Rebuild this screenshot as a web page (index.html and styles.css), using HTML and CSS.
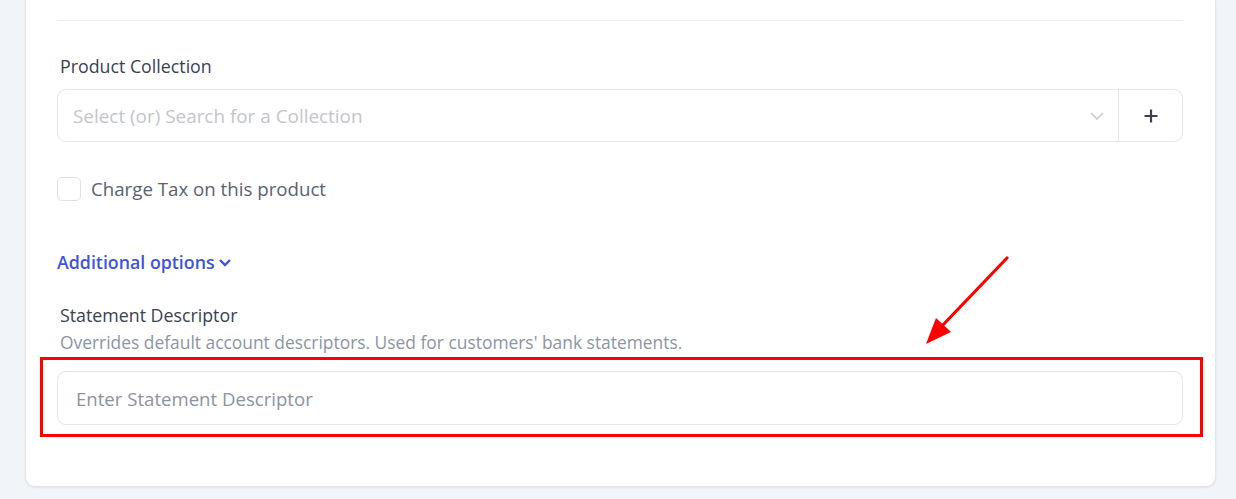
FILE: index.html
```html
<!DOCTYPE html>
<html lang="en">
<head>
<meta charset="utf-8">
<title>Product form</title>
<link rel="stylesheet" href="styles.css">
</head>
<body>
<div class="page">
  <div class="card">
    <div class="divider"></div>

    <div class="field field-collection">
      <div class="label">Product Collection</div>
      <div class="select-group">
        <div class="select">
          <span class="placeholder-light">Select (or) Search for a Collection</span>
          <svg class="chev" width="16" height="10" viewBox="0 0 16 10"><path d="M2 2 L8 8 L14 2" fill="none" stroke="#c9ccd3" stroke-width="1.6"/></svg>
        </div>
        <div class="add-btn">
          <svg width="16" height="16" viewBox="0 0 16 16"><path d="M8 1.5 V14.5 M1.5 8 H14.5" stroke="#3b4252" stroke-width="2.2" fill="none"/></svg>
        </div>
      </div>
    </div>

    <label class="check-row">
      <span class="checkbox"></span>
      <span class="check-text">Charge Tax on this product</span>
    </label>

    <div class="more">
      <span>Additional options</span>
      <svg width="14" height="9" viewBox="0 0 14 9"><path d="M2 2 L7 7 L12 2" fill="none" stroke="#3f55d4" stroke-width="2.4"/></svg>
    </div>

    <div class="field field-descriptor">
      <div class="label">Statement Descriptor</div>
      <div class="hint">Overrides default account descriptors. Used for customers' bank statements.</div>
      <div class="input-wrap">
        <div class="input"><span class="placeholder">Enter Statement Descriptor</span></div>
        <div class="highlight"></div>
      </div>
    </div>
  </div>
  <svg class="arrow" width="120" height="120" viewBox="900 240 120 120">
    <line x1="1007" y1="258" x2="941" y2="327" stroke="#ff0000" stroke-width="3.2" stroke-linecap="round"/>
    <polygon points="926,344 936,318 951,332" fill="#ff0000"/>
  </svg>
</div>
</body>
</html>
```

FILE: styles.css
```css
* { box-sizing: border-box; }

html, body {
  margin: 0;
  padding: 0;
  background: #f1f4f8;
  font-family: "Open Sans", "Noto Sans", sans-serif;
}

.page {
  position: relative;
  width: 1236px;
  height: 499px;
  overflow: hidden;
}

.card {
  margin-left: 25px;
  width: 1191px;
  height: 487px;
  background: #ffffff;
  border: 1px solid #e3e7ed;
  border-top: none;
  border-radius: 0 0 10px 10px;
  box-shadow: 0 1px 2px rgba(30, 40, 60, 0.08);
  padding: 20px 32px 0 31px;
  display: flex;
  flex-direction: column;
}

.divider {
  height: 1px;
  background: #eceff3;
}

.field-collection {
  margin-top: 34px;
}

.label {
  font-size: 17.8px;
  color: #3a4150;
  padding-left: 3px;
  line-height: 22px;
}

.select-group {
  margin-top: 12px;
  display: flex;
  height: 53px;
  border: 1px solid #e3e6eb;
  border-radius: 9px;
}

.select {
  flex: 1;
  display: flex;
  align-items: center;
  justify-content: space-between;
  padding: 0 13px 0 15px;
  border-right: 1px solid #e3e6eb;
}

.placeholder-light {
  font-size: 18.9px;
  color: #c3c6cd;
}

.add-btn {
  width: 63px;
  display: flex;
  align-items: center;
  justify-content: center;
}

.check-row {
  margin-top: 35px;
  display: flex;
  align-items: center;
  gap: 10px;
}

.checkbox {
  width: 24px;
  height: 24px;
  border: 1px solid #dfe2e7;
  border-radius: 5px;
  background: #fff;
}

.check-text {
  font-size: 18.7px;
  color: #5b6270;
  line-height: 24px;
}

.more {
  margin-top: 49px;
  display: flex;
  align-items: center;
  gap: 3px;
  color: #3f55d4;
  font-weight: 600;
  font-size: 17.8px;
  line-height: 24px;
}

.more svg { margin-top: 1px; }

.field-descriptor {
  margin-top: 30px;
}

.hint {
  margin-top: 5px;
  padding-left: 3px;
  font-size: 17.4px;
  color: #8d95a3;
  line-height: 22px;
}

.input-wrap {
  position: relative;
  margin-top: 18px;
}

.input {
  height: 54px;
  border: 1px solid #e3e6eb;
  border-radius: 9px;
  display: flex;
  align-items: center;
  padding-left: 18px;
}

.placeholder {
  font-size: 18.6px;
  color: #8c93a0;
}

.highlight {
  position: absolute;
  left: -17px;
  right: -20px;
  top: -14px;
  bottom: -12px;
  border: 3px solid #ff0000;
}

.arrow {
  position: absolute;
  left: 900px;
  top: 240px;
}
```
